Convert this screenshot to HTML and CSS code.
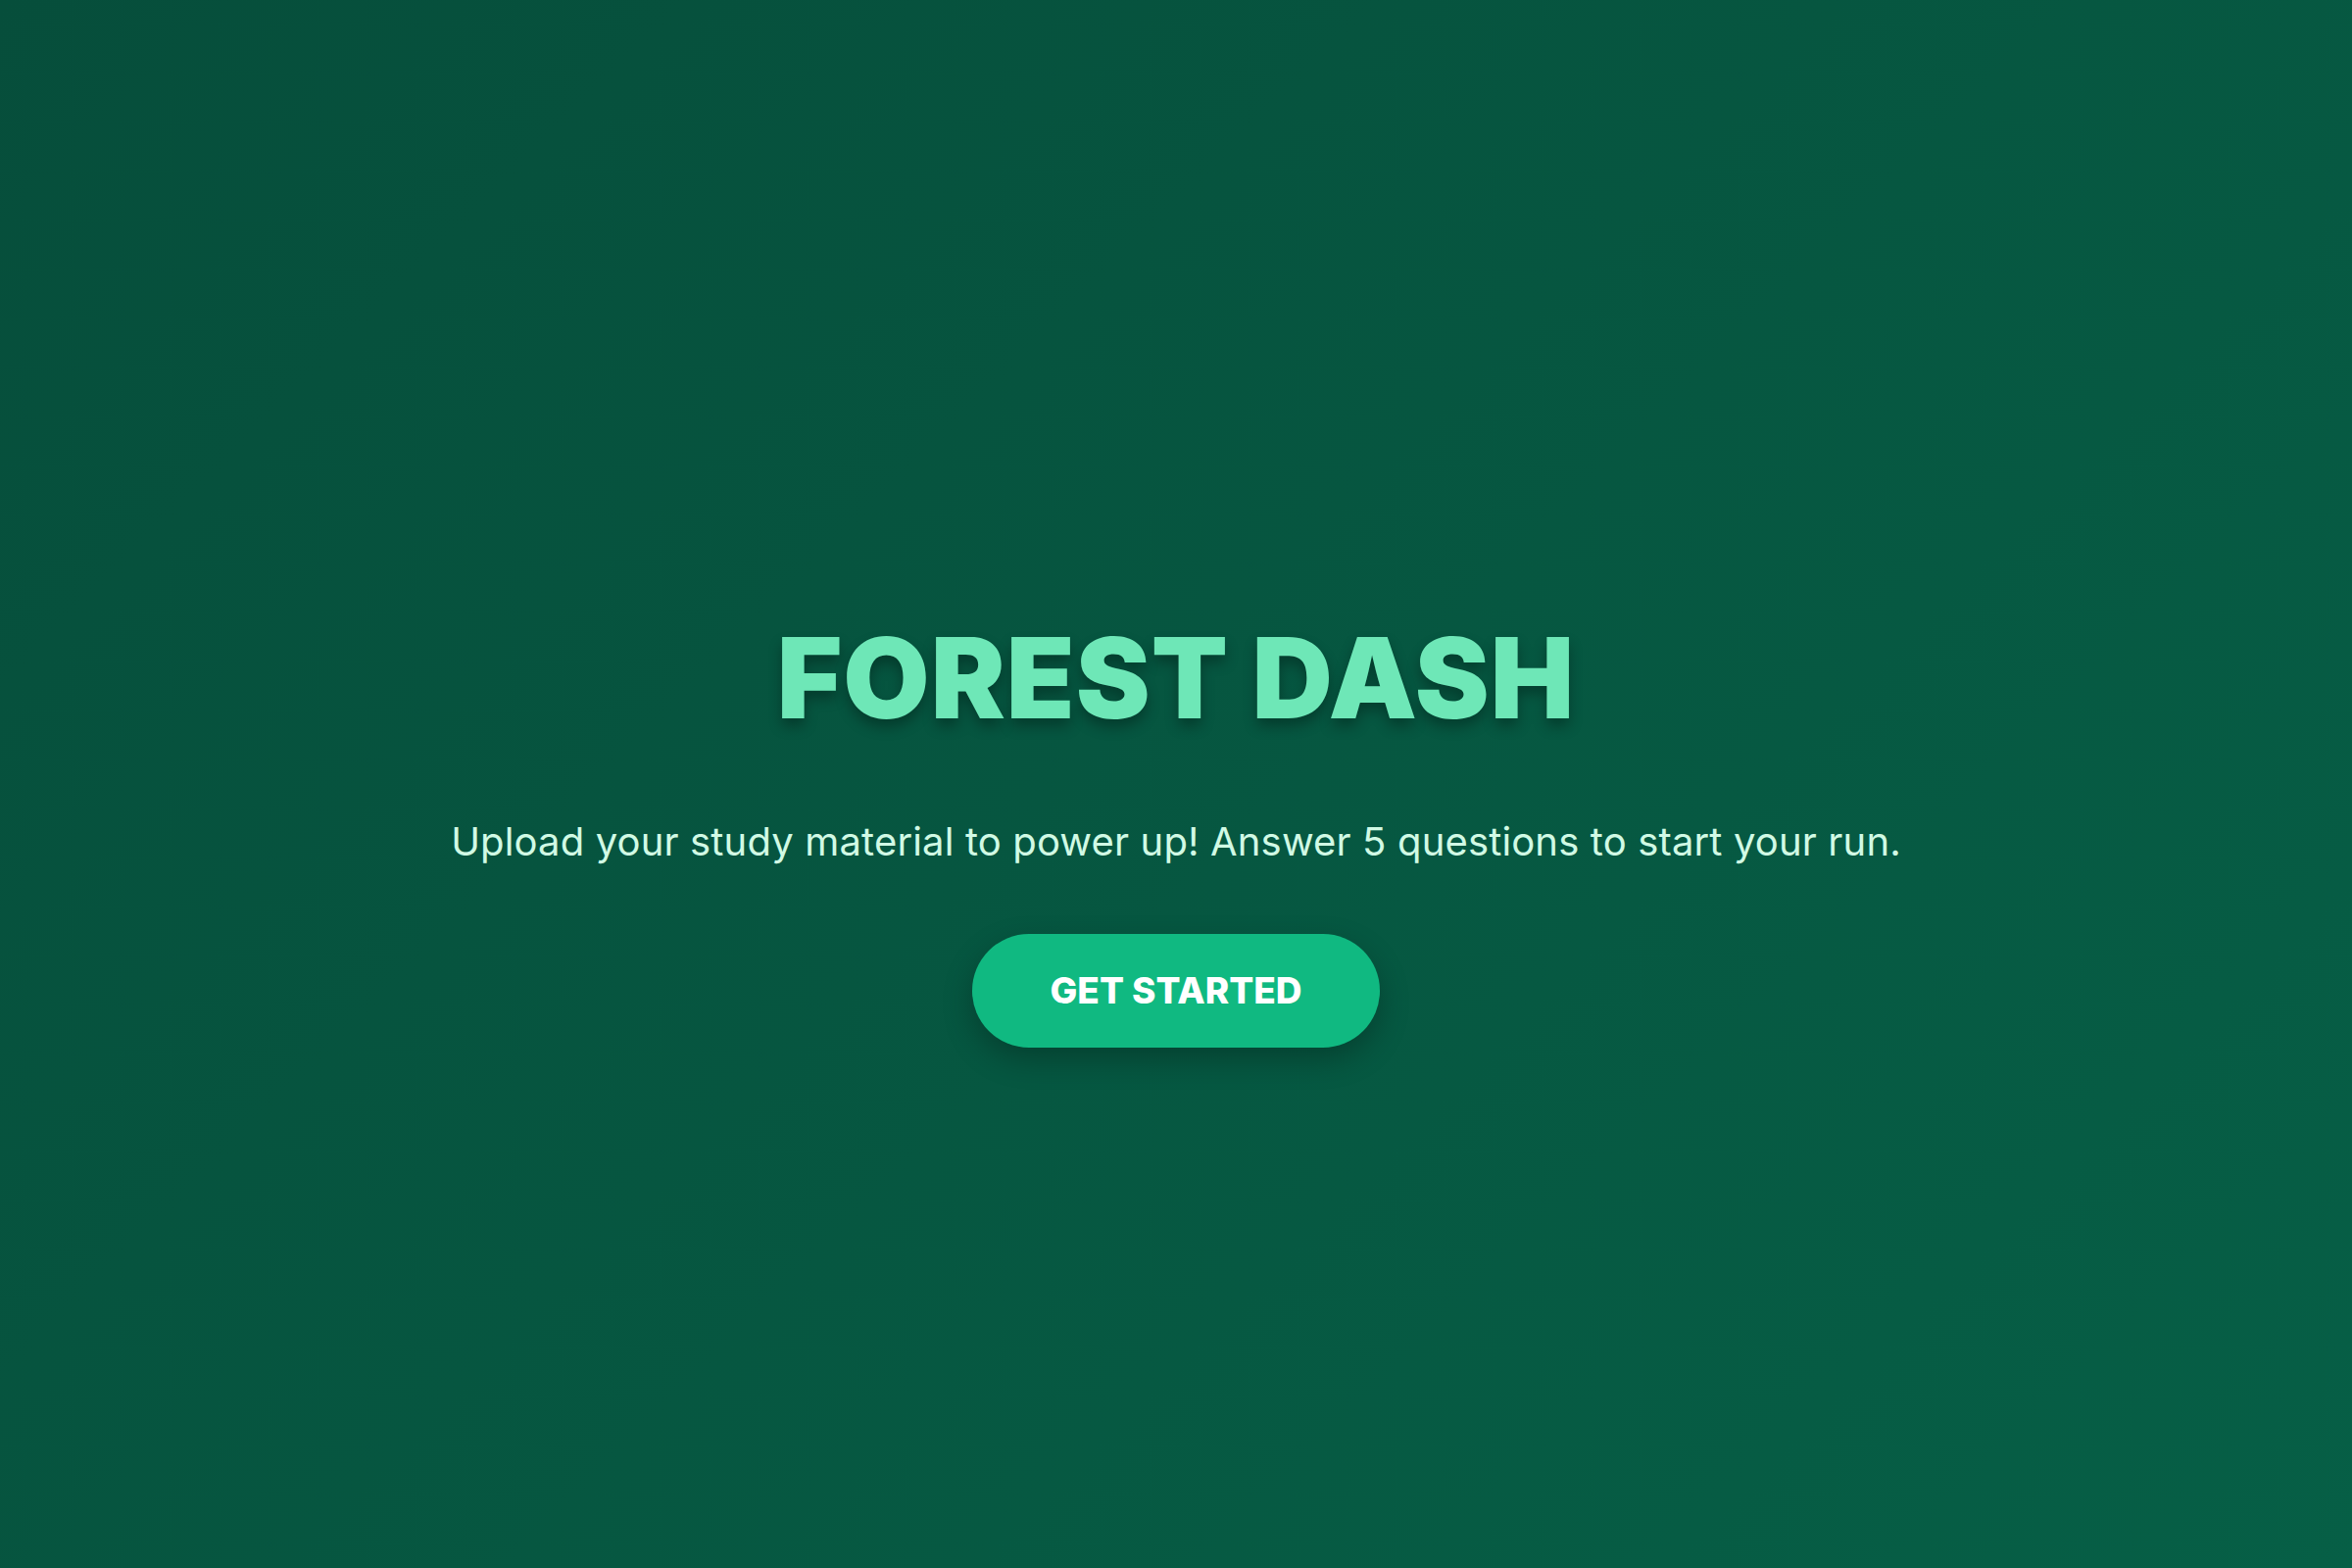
FILE: index.html
```html
<!DOCTYPE html>
<html lang="en">
<head>
<meta charset="utf-8">
<title>Forest Dash</title>
<link rel="stylesheet" href="styles.css">
</head>
<body>
<main class="hero">
  <h1 class="title">FOREST DASH</h1>
  <p class="subtitle">Upload your study material to power up! Answer 5 questions to start your run.</p>
  <button class="cta" type="button">GET STARTED</button>
</main>
</body>
</html>
```

FILE: styles.css
```css
html, body {
  margin: 0;
  padding: 0;
  height: 100%;
}

body {
  background: linear-gradient(135deg, #064e3b 0%, #065f46 100%);
  font-family: "Inter", "Open Sans", sans-serif;
  color: #d1fae5;
}

.hero {
  min-height: 100vh;
  box-sizing: border-box;
  display: flex;
  flex-direction: column;
  align-items: center;
  justify-content: center;
  padding-top: 98px;
  text-align: center;
}

.title {
  margin: 0;
  font-size: 114px;
  font-weight: 900;
  line-height: 1.1;
  letter-spacing: 1px;
  color: #6ee7b7;
  text-shadow: 0 8px 14px rgba(0, 0, 0, 0.3);
}

.subtitle {
  margin: 79px 0 0;
  font-size: 40px;
  font-weight: 400;
  letter-spacing: 0.15px;
  color: #d1fae5;
}

.cta {
  margin-top: 70px;
  width: 416px;
  height: 116px;
  border: none;
  border-radius: 58px;
  background: #10b981;
  color: #ffffff;
  font-family: "Inter", "Open Sans", sans-serif;
  font-size: 37px;
  font-weight: 800;
  cursor: pointer;
  box-shadow: 0 12px 30px rgba(0, 0, 0, 0.25);
}
```
